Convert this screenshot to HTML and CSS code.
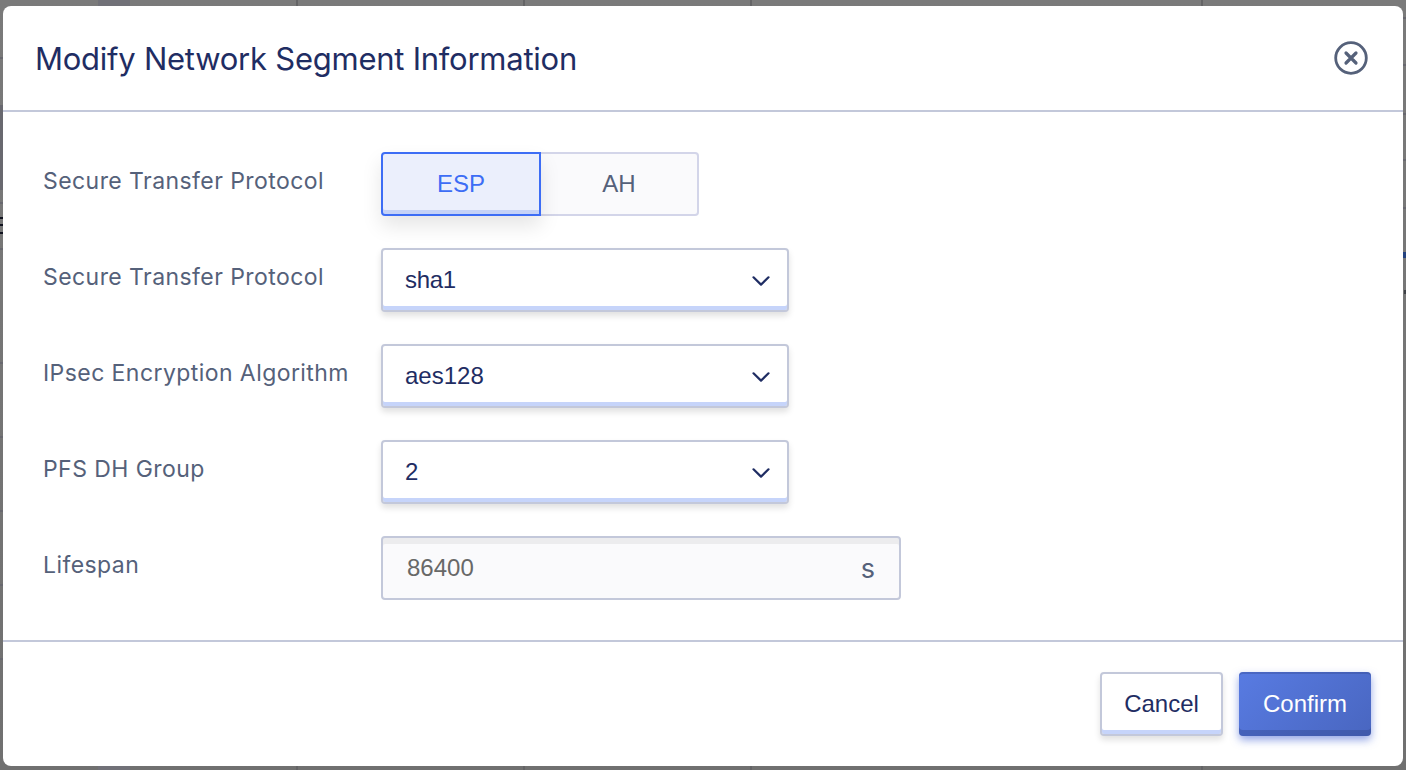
FILE: index.html
```html
<!DOCTYPE html>
<html lang="en">
<head>
<meta charset="utf-8">
<title>Modify Network Segment Information</title>
<link rel="stylesheet" href="styles.css">
</head>
<body>
<div class="backdrop">
  <svg class="page-behind" width="1406" height="770" viewBox="0 0 1406 770" aria-hidden="true">
    <path fill="#717178" d="M98 0h32v770H98z"/>
    <path fill="#646466" d="M296 0h2v770h-2zM523 0h2v770h-2zM750 0h2v770h-2zM1201 0h2v770h-2z"/>
    <path fill="#68686f" d="M0 57h3v2H0zM0 105h3v85H0zM0 202h3v2H0zM0 248h3v2H0zM0 362h3v2H0zM0 436h3v2H0zM0 510h3v2H0zM0 584h3v2H0zM0 658h3v2H0zM1403 17h3v2h-3zM1403 64h3v2h-3zM1403 113h3v2h-3zM1403 159h3v2h-3zM1403 207h3v2h-3z"/>
    <path fill="#10121f" d="M0 217h3v2H0zM0 224h3v2H0zM0 232h3v2H0z"/>
    <path fill="#24427f" d="M1403 252h3v6h-3z"/>
    <path fill="#3d4046" d="M1404 290h2v4h-2z"/>
  </svg>
  <section class="dialog" role="dialog" aria-labelledby="title">
    <header class="dialog-header">
      <h1 class="title" id="title">Modify Network Segment Information</h1>
      <button class="close" type="button" aria-label="Close">
        <svg width="34" height="34" viewBox="0 0 34 34" fill="none" stroke="#55617a"><circle cx="17" cy="17" r="15.3" stroke-width="2.8"/><path d="M12 12l10 10M22 12L12 22" stroke-width="3.2" stroke-linecap="round"/></svg>
      </button>
    </header>
    <main class="form">
      <div class="row">
        <span class="label">Secure Transfer Protocol</span>
        <div class="segmented">
          <button class="segment segment-active" type="button">ESP</button>
          <button class="segment segment-last" type="button">AH</button>
        </div>
      </div>
      <div class="row">
        <span class="label">Secure Transfer Protocol</span>
        <div class="select"><span class="value value-tight">sha1</span><svg class="chevron" width="18" height="12" viewBox="0 0 18 12"><path d="M1.5 2.3L9 9.6l7.5-7.3"/></svg></div>
      </div>
      <div class="row">
        <span class="label">IPsec Encryption Algorithm</span>
        <div class="select"><span class="value">aes128</span><svg class="chevron" width="18" height="12" viewBox="0 0 18 12"><path d="M1.5 2.3L9 9.6l7.5-7.3"/></svg></div>
      </div>
      <div class="row">
        <span class="label">PFS DH Group</span>
        <div class="select"><span class="value">2</span><svg class="chevron" width="18" height="12" viewBox="0 0 18 12"><path d="M1.5 2.3L9 9.6l7.5-7.3"/></svg></div>
      </div>
      <div class="row">
        <span class="label">Lifespan</span>
        <div class="input"><span class="number">86400</span><span class="unit">s</span></div>
      </div>
    </main>
    <footer class="dialog-footer">
      <button class="button cancel" type="button">Cancel</button>
      <button class="button confirm" type="button">Confirm</button>
    </footer>
  </section>
</div>
</body>
</html>
```
FILE: styles.css
```css
* { box-sizing: border-box; }
body { margin: 0; font-family: Inter, sans-serif; }
button { font: inherit; padding: 0; margin: 0; }
.backdrop { position: relative; width: 1406px; height: 770px; padding: 6px 3px 4px; background: linear-gradient(#7a7a7a, #707070); overflow: hidden; }
.page-behind { position: absolute; left: 0; top: 0; }
.dialog { position: relative; height: 760px; display: flex; flex-direction: column; background: #fff; border-radius: 8px; }
.dialog-header { height: 106px; padding: 0 35px 0 32px; display: flex; align-items: center; justify-content: space-between; border-bottom: 2px solid #c3c8da; }
.title { margin: 2px 0 0; font-size: 31px; font-weight: 400; line-height: 40px; letter-spacing: -.25px; color: #1f2d63; white-space: nowrap; }
.close { width: 34px; height: 34px; border: 0; background: none; }
.close svg { display: block; }
.form { flex: 1; padding: 40px; display: flex; flex-direction: column; gap: 32px; }
.row { height: 64px; display: flex; }
.label { width: 338px; padding-top: 13px; font-size: 23px; line-height: 32px; letter-spacing: .43px; color: #55617a; white-space: nowrap; }
.segmented { display: flex; font-family: "Liberation Sans", Arial, sans-serif; font-size: 24px; }
.segment { width: 160px; height: 64px; border: 2px solid #d3d5e9; background: #fafafc; color: #55617a; }
.segment-active { position: relative; border-color: #3d6df5; border-radius: 4px 0 0 4px; background: #ebeffc; color: #3d6df5; box-shadow: inset 0 -4px #c5d2f7, 0 10px 20px rgba(0,0,0,.1); }
.segment-last { width: 158px; border-left: 0; border-radius: 0 4px 4px 0; }
.select { width: 408px; height: 64px; padding: 0 17px 0 22px; display: flex; align-items: center; justify-content: space-between; border: 2px solid #c3c8da; border-radius: 4px; background: #fff; box-shadow: inset 0 -4px #c6d4fa, 0 4px 6px rgba(0,0,0,.12); font-family: "Liberation Sans", Arial, sans-serif; font-size: 24px; color: #1f2d63; }
.value-tight { letter-spacing: -.3px; }
.chevron { margin-top: 2px; fill: none; stroke: #1f2d63; stroke-width: 2.2; stroke-linecap: round; stroke-linejoin: round; }
.input { width: 520px; height: 64px; padding: 0 24px; display: flex; align-items: center; justify-content: space-between; border: 2px solid #c3c8da; border-radius: 4px; background: #fafafc; box-shadow: inset 0 6px #ececee; font-family: "Liberation Sans", Arial, sans-serif; font-size: 24px; color: #686868; }
.unit { font-family: Inter, sans-serif; font-size: 27px; color: #55617a; }
.dialog-footer { height: 126px; padding: 30px 32px; display: flex; justify-content: flex-end; gap: 16px; border-top: 2px solid #c3c8da; }
.button { height: 64px; border-radius: 4px; font-family: "Liberation Sans", Arial, sans-serif; font-size: 24px; }
.cancel { width: 123px; border: 2px solid #c3c8da; background: #fff; color: #1f2d63; box-shadow: inset 0 -4px #c6d4fa, 0 4px 6px rgba(0,0,0,.12); }
.confirm { width: 132px; border: 0; background: linear-gradient(135deg, #587be2, #4966c0); color: #fff; box-shadow: inset 0 -6px rgba(50,70,140,.4), inset 0 2px rgba(50,70,140,.35), 0 4px 8px rgba(61,92,210,.55); }
```
